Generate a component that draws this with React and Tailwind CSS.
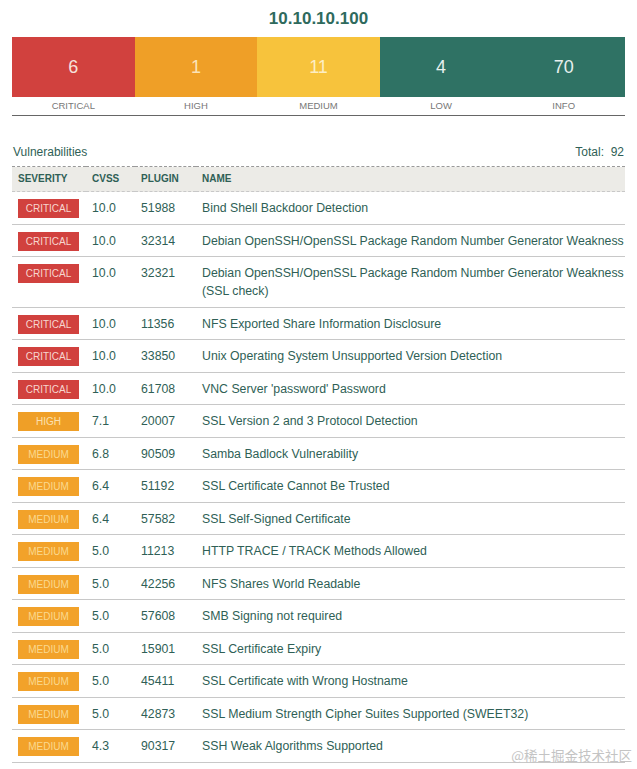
const summary = [
  { label: 'CRITICAL', count: 6, bg: 'bg-[#d1413e]', text: 'text-[#f6e1dc]' },
  { label: 'HIGH', count: 1, bg: 'bg-[#ef9f27]', text: 'text-[#fbe3b8]' },
  { label: 'MEDIUM', count: 11, bg: 'bg-[#f7c33c]', text: 'text-[#fdeec4]' },
  { label: 'LOW', count: 4, bg: 'bg-[#2f7264]', text: 'text-[#e7f0ee]' },
  { label: 'INFO', count: 70, bg: 'bg-[#2f7264]', text: 'text-[#e7f0ee]' },
]

const badge = {
  CRITICAL: 'bg-[#d1413e] text-[#f7d6cf]',
  HIGH: 'bg-[#ef9f27] text-[#fbe0b0]',
  MEDIUM: 'bg-[#f2a22a] text-[#fad98f]',
}

const rows = [
  ['CRITICAL', '10.0', '51988', 'Bind Shell Backdoor Detection'],
  ['CRITICAL', '10.0', '32314', 'Debian OpenSSH/OpenSSL Package Random Number Generator Weakness'],
  ['CRITICAL', '10.0', '32321', 'Debian OpenSSH/OpenSSL Package Random Number Generator Weakness (SSL check)'],
  ['CRITICAL', '10.0', '11356', 'NFS Exported Share Information Disclosure'],
  ['CRITICAL', '10.0', '33850', 'Unix Operating System Unsupported Version Detection'],
  ['CRITICAL', '10.0', '61708', "VNC Server 'password' Password"],
  ['HIGH', '7.1', '20007', 'SSL Version 2 and 3 Protocol Detection'],
  ['MEDIUM', '6.8', '90509', 'Samba Badlock Vulnerability'],
  ['MEDIUM', '6.4', '51192', 'SSL Certificate Cannot Be Trusted'],
  ['MEDIUM', '6.4', '57582', 'SSL Self-Signed Certificate'],
  ['MEDIUM', '5.0', '11213', 'HTTP TRACE / TRACK Methods Allowed'],
  ['MEDIUM', '5.0', '42256', 'NFS Shares World Readable'],
  ['MEDIUM', '5.0', '57608', 'SMB Signing not required'],
  ['MEDIUM', '5.0', '15901', 'SSL Certificate Expiry'],
  ['MEDIUM', '5.0', '45411', 'SSL Certificate with Wrong Hostname'],
  ['MEDIUM', '5.0', '42873', 'SSL Medium Strength Cipher Suites Supported (SWEET32)'],
  ['MEDIUM', '4.3', '90317', 'SSH Weak Algorithms Supported'],
]

export default function App() {
  return (
    <div className="relative min-h-[769px] bg-white px-3 pt-2 font-['Liberation_Sans',Arial,sans-serif] text-[#2f5f56]">
      {/* Host title */}
      <h1 className="text-center text-[17px] font-bold leading-[22px] text-[#2e6a5d]">10.10.10.100</h1>

      {/* Severity summary bar */}
      <div className="mt-[7px] grid grid-cols-5 border-b border-[#666] pb-[4px]">
        {summary.map((s) => (
          <div key={s.label} className="flex flex-col">
            <div className={`flex h-[60px] items-center justify-center text-[18px] ${s.bg} ${s.text}`}>
              {s.count}
            </div>
            <div className="mt-[4px] text-center text-[9.5px] leading-[10px] text-[#777]">{s.label}</div>
          </div>
        ))}
      </div>

      {/* Vulnerability list */}
      <div className="mt-[29px] flex items-end justify-between px-px text-[12px] leading-[14px]">
        <span>Vulnerabilities</span>
        <span>Total:&nbsp; 92</span>
      </div>

      <table className="mt-[7px] w-full border-collapse text-left text-[12.3px]">
        <thead>
          <tr className="border-t border-dashed border-[#999] border-b border-b-[#c8c8c8] bg-[#ecebe7]">
            <th className="w-[74px] py-[6px] pl-[6px] text-[10px] font-bold leading-[12px]">SEVERITY</th>
            <th className="w-[49px] py-[6px] pl-[6px] text-[10px] font-bold leading-[12px]">CVSS</th>
            <th className="w-[61px] py-[6px] pl-[6px] text-[10px] font-bold leading-[12px]">PLUGIN</th>
            <th className="py-[6px] pl-[6px] text-[10px] font-bold leading-[12px]">NAME</th>
          </tr>
        </thead>
        <tbody>
          {rows.map(([sev, cvss, plugin, name]) => (
            <tr key={plugin} className="border-b border-[#c8c8c8] align-top">
              <td className="pt-[7px] pb-[5.5px] pl-[6px]">
                <div className={`flex h-[19px] w-[61px] items-center justify-center text-[10px] ${badge[sev]}`}>{sev}</div>
              </td>
              <td className="pt-[7px] pb-[6.5px] pl-[6px] leading-[18px]">{cvss}</td>
              <td className="pt-[7px] pb-[6.5px] pl-[6px] leading-[18px]">{plugin}</td>
              <td className="pt-[7px] pb-[6.5px] pl-[6px] leading-[18px]">{name}</td>
            </tr>
          ))}
        </tbody>
      </table>

      {/* Watermark */}
      <div className="absolute bottom-[4px] right-[5px] font-['Noto_Sans_CJK_SC',sans-serif] text-[13.5px] text-[#c4c4c4]">
        @稀土掘金技术社区
      </div>
    </div>
  )
}
